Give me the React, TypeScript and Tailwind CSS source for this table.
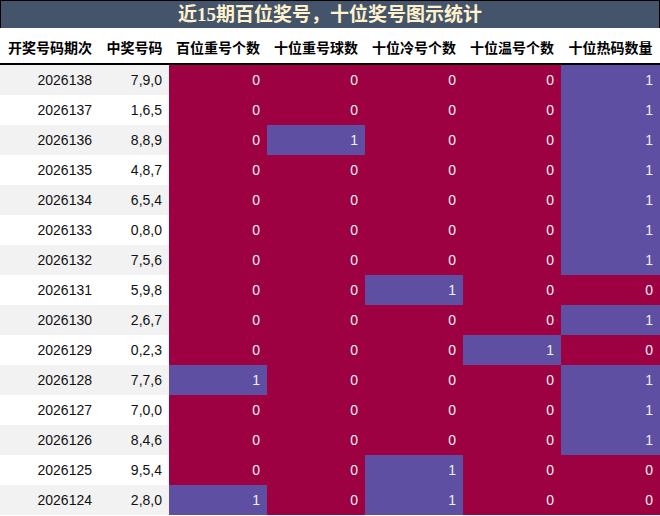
import React from "react";

const rows: [string, string, number[]][] = [
  ["2026138", "7,9,0", [0, 0, 0, 0, 1]],
  ["2026137", "1,6,5", [0, 0, 0, 0, 1]],
  ["2026136", "8,8,9", [0, 1, 0, 0, 1]],
  ["2026135", "4,8,7", [0, 0, 0, 0, 1]],
  ["2026134", "6,5,4", [0, 0, 0, 0, 1]],
  ["2026133", "0,8,0", [0, 0, 0, 0, 1]],
  ["2026132", "7,5,6", [0, 0, 0, 0, 1]],
  ["2026131", "5,9,8", [0, 0, 1, 0, 0]],
  ["2026130", "2,6,7", [0, 0, 0, 0, 1]],
  ["2026129", "0,2,3", [0, 0, 0, 1, 0]],
  ["2026128", "7,7,6", [1, 0, 0, 0, 1]],
  ["2026127", "7,0,0", [0, 0, 0, 0, 1]],
  ["2026126", "8,4,6", [0, 0, 0, 0, 1]],
  ["2026125", "9,5,4", [0, 0, 1, 0, 0]],
  ["2026124", "2,8,0", [1, 0, 1, 0, 0]],
];

const headers = ["开奖号码期次", "中奖号码", "百位重号个数", "十位重号球数", "十位冷号个数", "十位温号个数", "十位热码数量"];

const grid = "grid grid-cols-[100px_69px_98px_98px_98px_98px_99px]";

export default function App() {
  return (
    <div className="w-[660px] h-[516px] bg-white overflow-hidden" style={{ fontFamily: '"Liberation Sans", "Noto Sans CJK SC", sans-serif' }}>
      <div
        className="h-[28px] bg-[#44546a] border-t border-l border-r border-black flex items-center justify-center text-[#fff2cc] text-[19px] font-bold leading-none"
        style={{ fontFamily: '"Liberation Serif", "Noto Sans CJK SC", serif' }}
      >
        近15期百位奖号，十位奖号图示统计
      </div>
      <div className={`${grid} h-[37px] border-b-2 border-black`}>
        {headers.map((h) => (
          <div key={h} className="flex items-center justify-center pt-[3px] text-[14px] font-bold text-black whitespace-nowrap" style={{ fontFamily: '"Noto Sans CJK SC", sans-serif' }}>
            {h}
          </div>
        ))}
      </div>
      {rows.map(([id, nums, vals], i) => (
        <div key={id} className={`${grid} h-[30px] ${i % 2 === 0 ? "bg-[#f2f2f2]" : "bg-white"}`}>
          <div className="flex items-center justify-end pr-[8px] text-[14px] text-[#111]">{id}</div>
          <div className="flex items-center justify-end pr-[7px] text-[14px] text-[#111]">{nums}</div>
          {vals.map((v, j) => (
            <div
              key={j}
              className={`flex items-center justify-end pr-[7px] text-[14px] text-[#f0f0f0] ${v ? "bg-[#5e4fa2]" : "bg-[#9e0142]"}`}
            >
              {v}
            </div>
          ))}
        </div>
      ))}
    </div>
  );
}
